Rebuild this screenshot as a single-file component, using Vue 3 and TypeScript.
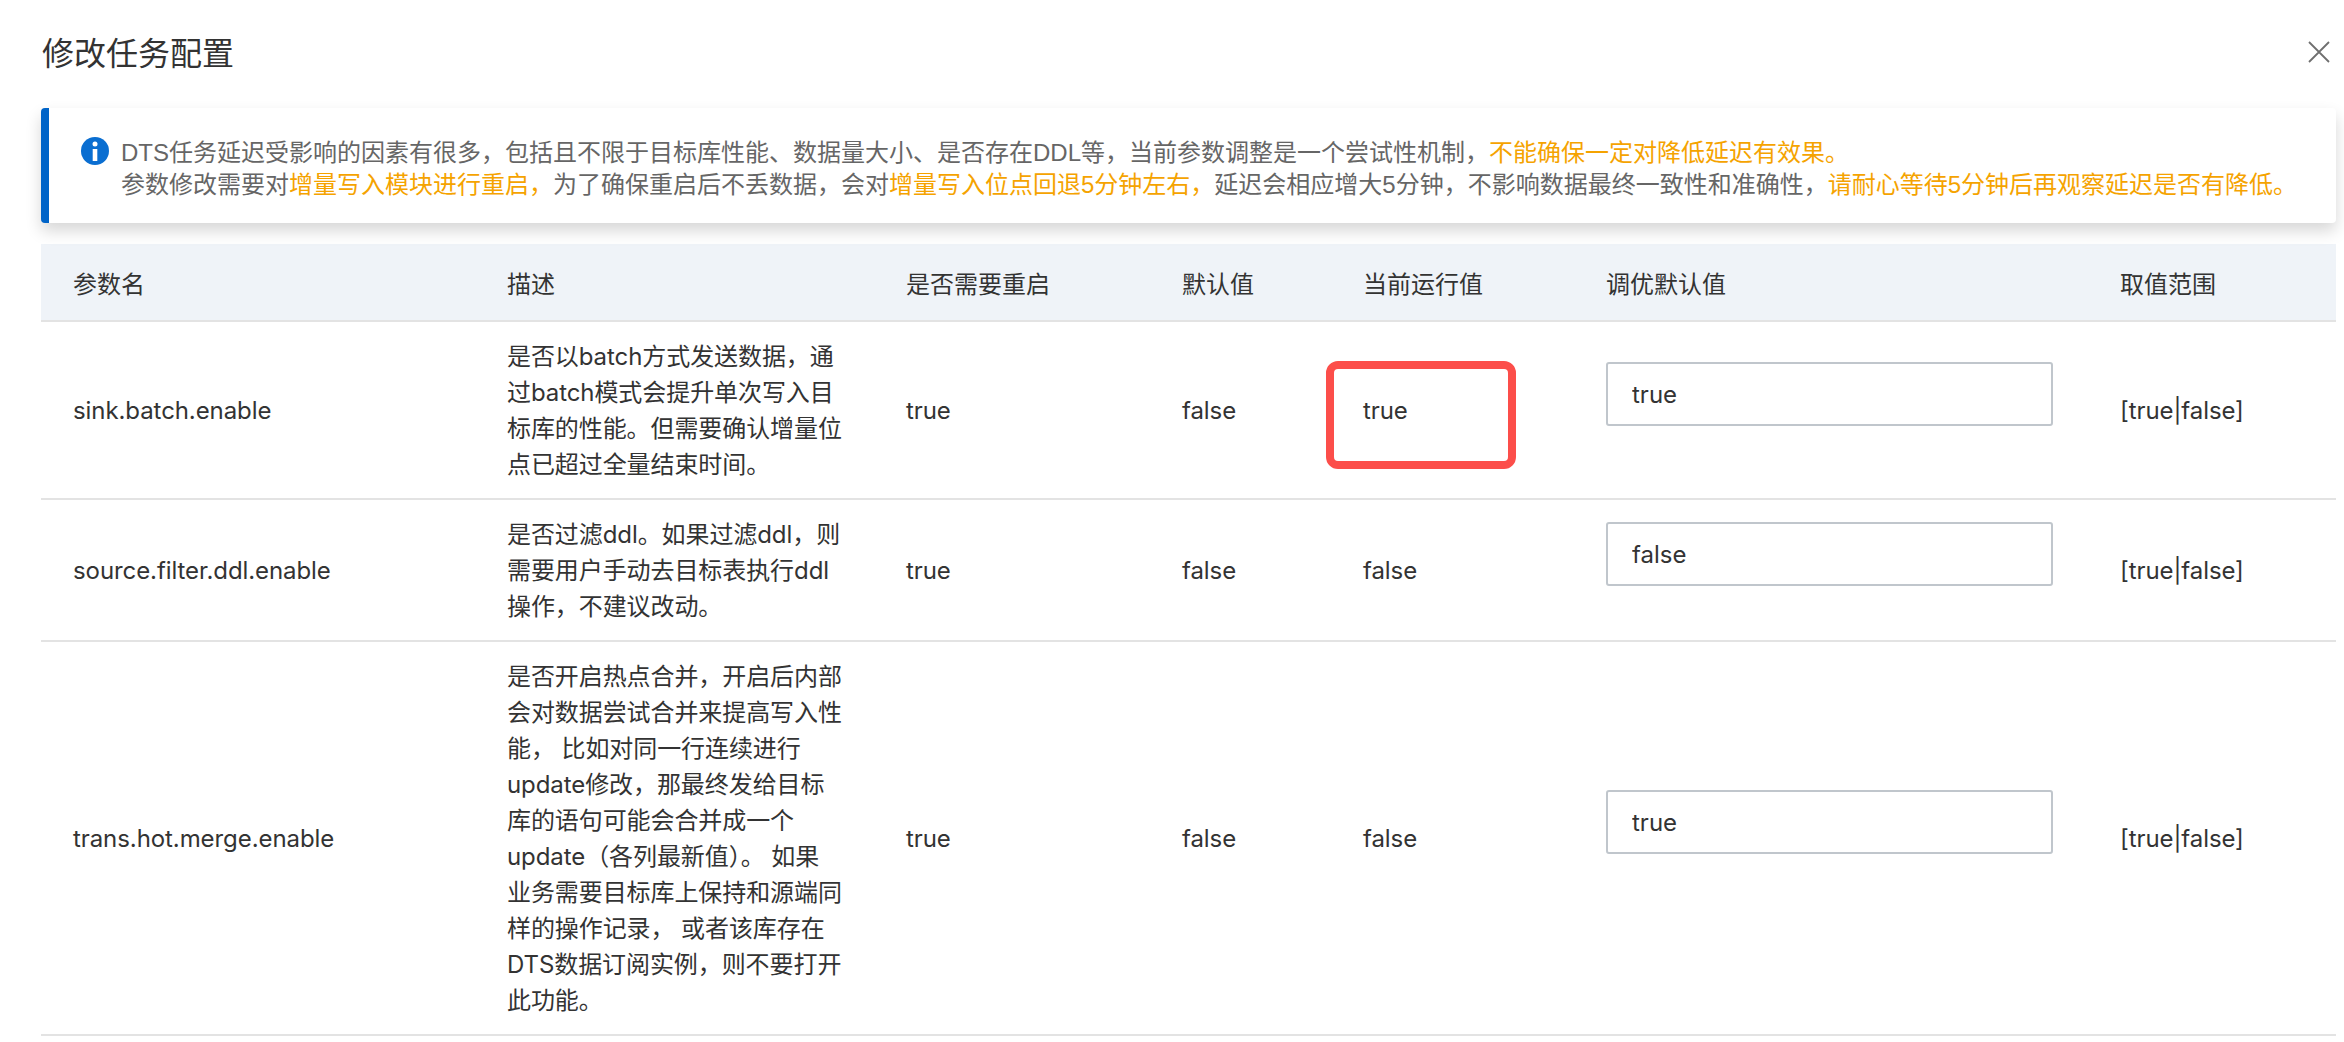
<script setup lang="ts">
interface Row {
  name: string
  desc: string
  restart: string
  def: string
  current: string
  tuned: string
  range: string
  mark?: boolean
}
const rows: Row[] = [
  { name: 'sink.batch.enable', desc: '是否以batch方式发送数据，通过batch模式会提升单次写入目标库的性能。但需要确认增量位点已超过全量结束时间。', restart: 'true', def: 'false', current: 'true', tuned: 'true', range: '[true|false]', mark: true },
  { name: 'source.filter.ddl.enable', desc: '是否过滤ddl。如果过滤ddl，则需要用户手动去目标表执行ddl操作，不建议改动。', restart: 'true', def: 'false', current: 'false', tuned: 'false', range: '[true|false]' },
  { name: 'trans.hot.merge.enable', desc: '是否开启热点合并，开启后内部会对数据尝试合并来提高写入性能， 比如对同一行连续进行update修改，那最终发给目标库的语句可能会合并成一个update（各列最新值）。 如果业务需要目标库上保持和源端同样的操作记录， 或者该库存在DTS数据订阅实例，则不要打开此功能。', restart: 'true', def: 'false', current: 'false', tuned: 'true', range: '[true|false]' },
]
const heads = ['参数名', '描述', '是否需要重启', '默认值', '当前运行值', '调优默认值', '取值范围']
const widths = [435, 399, 276, 181, 243, 514, 247]
</script>

<template>
  <div class="page">
    <header class="head">
      <h1 class="title">修改任务配置</h1>
      <svg class="close" width="22" height="22" viewBox="0 0 22 22" fill="none" stroke="#6f6f6f" stroke-width="1.8">
        <path d="M1 1 L21 21 M21 1 L1 21" />
      </svg>
    </header>

    <section class="alert">
      <svg class="info" width="28" height="28" viewBox="0 0 28 28">
        <circle cx="14" cy="14" r="14" fill="#0a6ed1" />
        <circle cx="14" cy="7" r="2.5" fill="#fff" />
        <rect x="11.7" y="12" width="4.6" height="12" fill="#fff" />
      </svg>
      <p class="alert-text">
        DTS任务延迟受影响的因素有很多，包括且不限于目标库性能、数据量大小、是否存在DDL等，当前参数调整是一个尝试性机制，<span class="warn">不能确保一定对降低延迟有效果。</span><br />
        参数修改需要对<span class="warn">增量写入模块进行重启，</span>为了确保重启后不丢数据，会对<span class="warn">增量写入位点回退5分钟左右，</span>延迟会相应增大5分钟，不影响数据最终一致性和准确性，<span class="warn">请耐心等待5分钟后再观察延迟是否有降低。</span>
      </p>
    </section>

    <table class="grid">
      <colgroup>
        <col v-for="(w, i) in widths" :key="i" :style="{ width: w + 'px' }" />
      </colgroup>
      <thead>
        <tr>
          <th v-for="h in heads" :key="h">{{ h }}</th>
        </tr>
      </thead>
      <tbody>
        <tr v-for="r in rows" :key="r.name">
          <td>{{ r.name }}</td>
          <td class="desc">{{ r.desc }}</td>
          <td>{{ r.restart }}</td>
          <td>{{ r.def }}</td>
          <td class="cur">
            {{ r.current }}
            <span v-if="r.mark" class="mark"></span>
          </td>
          <td class="edit"><input class="field" :value="r.tuned" /></td>
          <td>{{ r.range }}</td>
        </tr>
      </tbody>
    </table>
  </div>
</template>

<style scoped>
.page {
  width: 2344px;
  height: 1042px;
  overflow: hidden;
  box-sizing: border-box;
  padding: 0 8px 0 41px;
  background: #fff;
  font-family: "Liberation Sans", "Noto Sans CJK SC", sans-serif;
  font-size: 24px;
  color: #333;
}
.head {
  height: 108px;
  display: flex;
  justify-content: space-between;
  align-items: flex-start;
}
.title {
  margin: 34px 0 0 1px;
  font-size: 32px;
  line-height: 40px;
  font-weight: 400;
  color: #333;
}
.close {
  margin: 41px 6px 0 0;
}
.alert {
  height: 115px;
  box-sizing: border-box;
  display: flex;
  align-items: flex-start;
  padding: 29px 32px 0 32px;
  border-left: 8px solid #0064c8;
  border-radius: 4px;
  background: #fff;
  box-shadow: 0 8px 16px rgba(0, 0, 0, 0.16);
  position: relative;
}
.info {
  flex: none;
  margin: 0 12px 0 0;
}
.alert-text {
  margin: 0;
  font-size: 24px;
  line-height: 32px;
  color: #666;
  white-space: nowrap;
}
.warn {
  color: #f5a300;
}
.grid {
  margin-top: 21px;
  width: 2295px;
  table-layout: fixed;
  border-collapse: separate;
  border-spacing: 0;
  font-family: Inter, "Noto Sans CJK SC", sans-serif;
}
th {
  height: 76px;
  padding: 0 31px;
  background: #eff3f8;
  border-bottom: 2px solid #e3e3e3;
  text-align: left;
  font-weight: 400;
  color: #333;
}
td {
  padding: 17px 31px 15px;
  border-bottom: 2px solid #e3e3e3;
  line-height: 36px;
  letter-spacing: -0.08px;
  vertical-align: middle;
  overflow-wrap: anywhere;
}
th:first-child,
td:first-child {
  padding-left: 32px;
}
td.desc {
  padding-right: 33px;
}
td.edit {
  padding: 16px 31px;
}
.cur {
  position: relative;
}
.mark {
  position: absolute;
  left: -6px;
  top: 39px;
  width: 190px;
  height: 108px;
  box-sizing: border-box;
  border: 8px solid #fc4e4a;
  border-radius: 12px;
}
.field {
  display: block;
  width: 447px;
  height: 64px;
  margin-bottom: 32px;
  box-sizing: border-box;
  padding: 0 24px;
  border: 2px solid #c0c6cc;
  border-radius: 3px;
  background: #fff;
  font: inherit;
  color: #333;
  outline: none;
}
</style>
